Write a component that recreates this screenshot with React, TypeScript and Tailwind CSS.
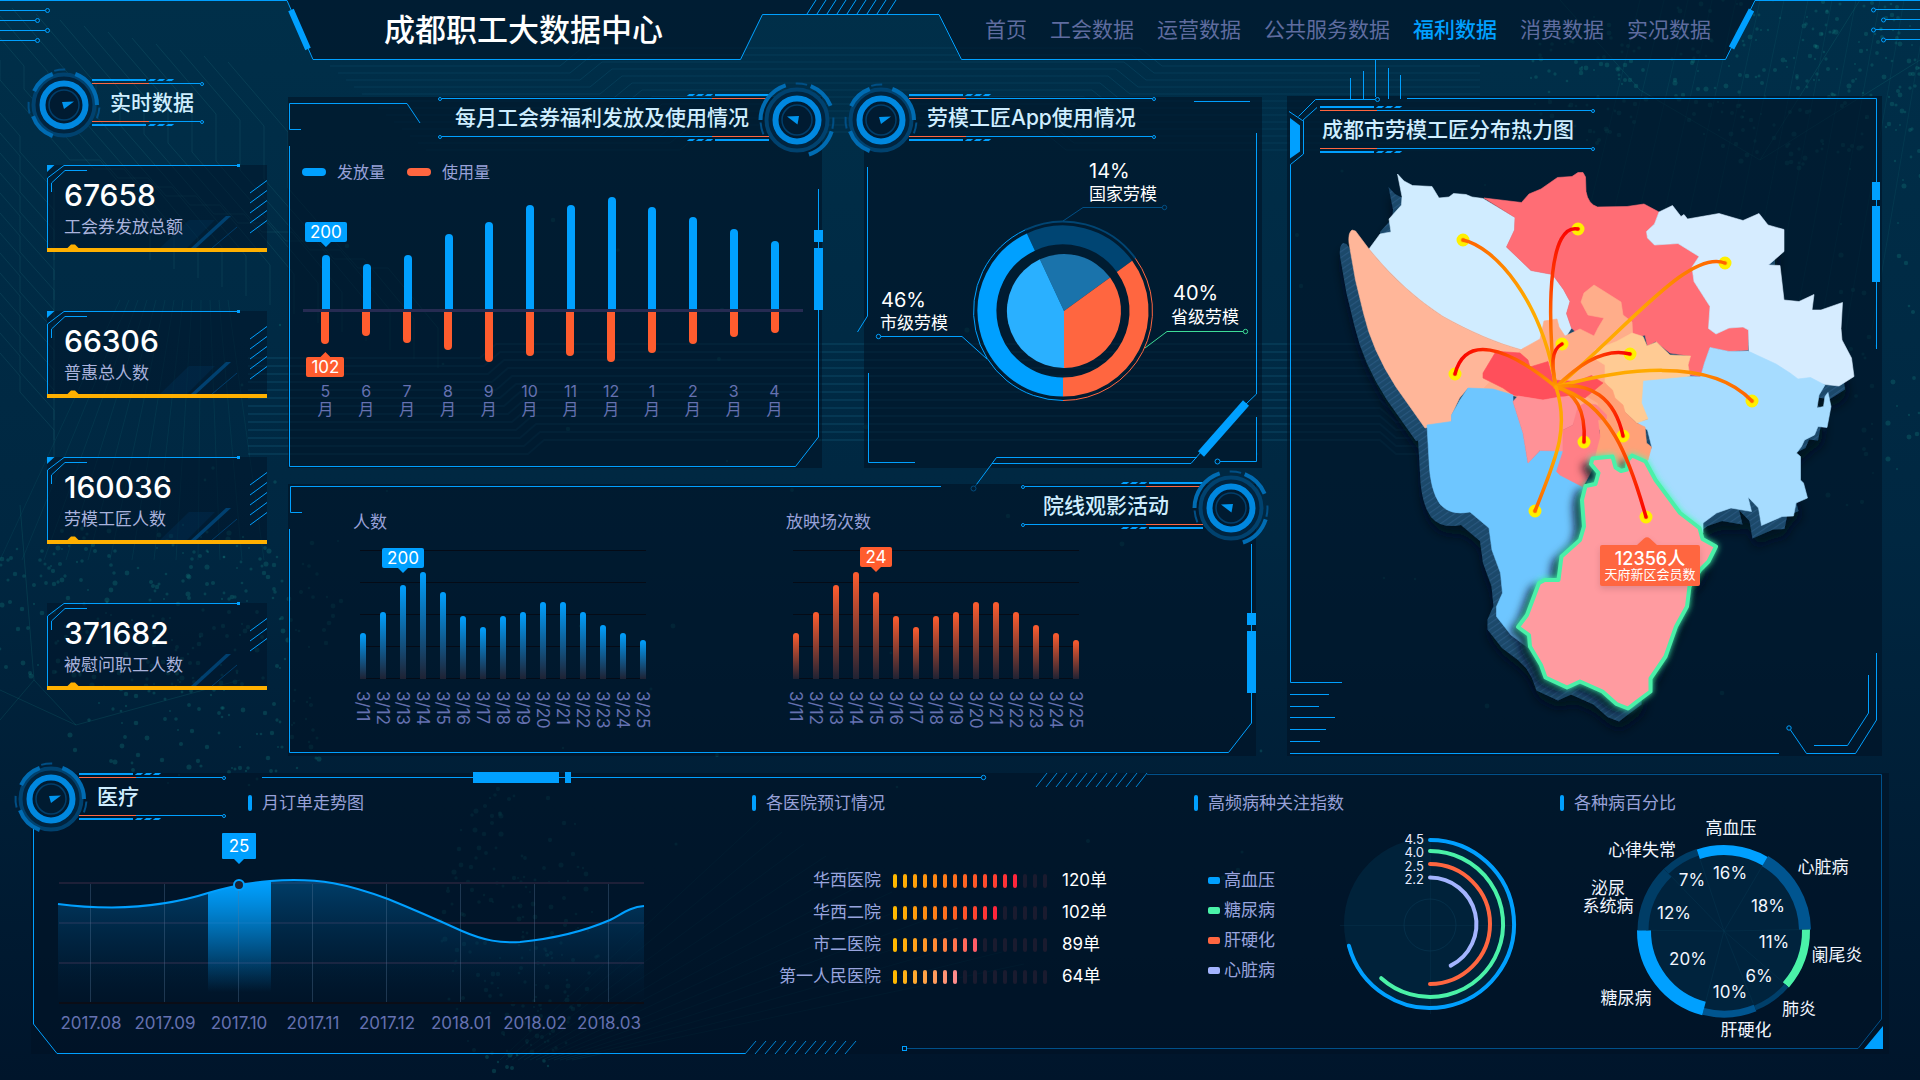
import React from "react";

/* ---------- helpers ---------- */

const polar = (cx: number, cy: number, r: number, deg: number) => {
  const a = ((deg - 90) * Math.PI) / 180;
  return `${(cx + r * Math.cos(a)).toFixed(1)} ${(cy + r * Math.sin(a)).toFixed(1)}`;
};

const arc = (cx: number, cy: number, r: number, from: number, to: number) =>
  `M${polar(cx, cy, r, from)} A${r} ${r} 0 ${to - from > 180 ? 1 : 0} 1 ${polar(cx, cy, r, to)}`;

const wedge = (cx: number, cy: number, r: number, from: number, to: number) =>
  `M${cx} ${cy} L${polar(cx, cy, r, from)} A${r} ${r} 0 ${to - from > 180 ? 1 : 0} 1 ${polar(cx, cy, r, to)} Z`;

const random = (seed: number) => {
  let s = seed;
  return () => {
    s = (s * 16807) % 2147483647;
    return s / 2147483647;
  };
};

const cloud = (seed: number, count: number, cx: number, cy: number, rx: number, ry: number) => {
  const next = random(seed);
  return Array.from({ length: count }, () => {
    const a = next() * Math.PI * 2;
    const d = Math.sqrt(next());
    return { x: Math.round(cx + Math.cos(a) * d * rx), y: Math.round(cy + Math.sin(a) * d * ry), r: 1 + next() * 1.6 };
  });
};

const dots = [
  ...cloud(7, 260, 1790, 60, 130, 110),
  ...cloud(19, 90, 1900, 250, 60, 260),
  ...cloud(31, 260, 150, 610, 190, 90),
  ...cloud(43, 90, 200, 730, 140, 60),
  ...cloud(57, 190, 520, 930, 80, 150),
  ...cloud(71, 80, 1590, 80, 60, 70),
  ...cloud(83, 60, 1000, 500, 900, 400),
];

/* ---------- shared pieces ---------- */

function Backdrop() {
  const bands = Array.from({ length: 13 }, (_, i) => i);
  return (
    <svg aria-hidden="true" className="pointer-events-none absolute inset-0 h-full w-full" viewBox="0 0 1920 1080" preserveAspectRatio="none" fill="none">
      <g stroke="#2b8a8f" strokeOpacity="0.18">
        {bands.map((i) => (
          <path key={i} d={`M${i * 24 - 60} ${-10 + i * 6} l60 70 v${20 + i * 3} l70 80 h30 l50 60 v40`} />
        ))}
        {bands.map((i) => (
          <path key={`b${i}`} d={`M${-20} ${90 + i * 20} l40 46 v16 l34 38 v30`} />
        ))}
      </g>
      <g stroke="#1f8fb0" strokeOpacity="0.15">
        {bands.map((i) => (
          <path key={i} d={`M${330 + i * 8} ${66 + i * 7} H${560 + i * 10} l22 -18 H${1140 - i * 8} l22 18 H1480`} />
        ))}
        {bands.map((i) => (
          <path key={`c${i}`} strokeWidth="2" d={`M248 ${358 + i * 8} H${480 + i * 4} l16 -14 H1380 l16 14 h60`} />
        ))}
      </g>
      <g stroke="#1c8f8a" strokeOpacity="0.12">
        {bands.map((i) => (
          <path key={i} d={`M${i * 22} 560 L${120 + i * 9} 300 M${500 + i * 6} 1060 L${760 + i * 22} ${820 + i * 12} M${1640 + i * 24} 0 L${1560 + i * 26} 330`} />
        ))}
        <path d="M0 720 L34 680 L76 725 L0 690 M34 680 L20 505 M76 725 L240 680 M1560 0 L1640 90 L1760 160 L1920 60 M1760 160 L1860 0" strokeOpacity="0.18" />
      </g>
      <g fill="#12787a" fillOpacity="0.32">
        {dots.map((d, i) => (
          <circle key={i} cx={d.x} cy={d.y} r={d.r} />
        ))}
      </g>
    </svg>
  );
}

function Frame({ box, children }: { box: string; children: React.ReactNode }) {
  return (
    <svg aria-hidden="true" className="pointer-events-none absolute inset-0 h-full w-full overflow-visible" viewBox={box} preserveAspectRatio="none" fill="none" stroke="#00a0ff">
      {children}
    </svg>
  );
}

function Dial({ flipped }: { flipped?: boolean }) {
  return (
    <svg aria-hidden="true" className="relative h-[84px] w-[84px] shrink-0" viewBox="0 0 84 84" fill="none">
      <circle cx="42" cy="42" r="32" fill="#00243f" />
      <circle cx="42" cy="42" r="30.5" stroke="#00426f" strokeWidth="4" />
      <circle cx="42" cy="42" r="21.5" fill="#001b31" stroke="#0088e0" strokeWidth="6" />
      <circle cx="42" cy="42" r="15" stroke="#003f6c" strokeWidth="1.5" />
      {flipped ? (
        <g>
          <g stroke="#006cb3" strokeWidth="4">
            <path d={arc(42, 42, 36.5, 270, 342)} />
            <path d={arc(42, 42, 36.5, 22, 67)} />
            <path d={arc(42, 42, 36.5, 108, 161)} />
          </g>
          <g stroke="#004f85" strokeWidth="2">
            <path d={arc(42, 42, 36.5, 358, 376)} />
            <path d={arc(42, 42, 36.5, 86, 104)} />
            <path d={arc(42, 42, 36.5, 247, 266)} />
          </g>
          <path d="M32 38.5 L44 38 L42.5 46.5 Z" fill="#0095ee" />
        </g>
      ) : (
        <g>
          <g stroke="#006cb3" strokeWidth="4">
            <path d={arc(42, 42, 33, 295, 340)} />
            <path d={arc(42, 42, 33, 20, 90)} />
            <path d={arc(42, 42, 33, 200, 250)} />
          </g>
          <g stroke="#004f85" strokeWidth="2">
            <path d={arc(42, 42, 35.5, 344, 362)} />
            <path d={arc(42, 42, 35.5, 94, 112)} />
            <path d={arc(42, 42, 35.5, 256, 275)} />
          </g>
          <path d="M52 38.5 L40 39 L42 46 Z" fill="#0095ee" />
        </g>
      )}
    </svg>
  );
}

function Rails({ flipped, bottom }: { flipped?: boolean; bottom?: boolean }) {
  const thick = (
    <div className={`flex h-[2px] gap-[3px] ${flipped ? "flex-row-reverse" : ""}`}>
      <span className="w-[54px] bg-[#00a0ff]" />
      <span className="w-[6px] -skew-x-[50deg] bg-[#00a0ff]" />
      <span className="w-[6px] -skew-x-[50deg] bg-[#00a0ff]" />
      <span className="w-[6px] -skew-x-[50deg] bg-[#00a0ff]" />
    </div>
  );
  const thin = (
    <div className={`flex h-[5px] items-center ${flipped ? "flex-row-reverse" : ""}`}>
      <span className="h-px w-[57px] bg-[#ff6640]" />
      <span className="h-px flex-1 bg-[#00a0ff]" />
      <span className="h-[4px] w-[4px] rounded-full border border-[#00a0ff]" />
    </div>
  );
  return <div aria-hidden="true">{bottom ? [<div key="a">{thin}</div>, <div key="b">{thick}</div>] : [<div key="a">{thick}</div>, <div key="b">{thin}</div>]}</div>;
}

function Title({ text, flipped, textClass, children }: { text: string; flipped?: boolean; textClass: string; children?: React.ReactNode }) {
  return (
    <div className={`flex items-center ${flipped ? "flex-row-reverse" : ""}`}>
      {children}
      <div className={children ? "mb-[5px]" : ""}>
        <Rails flipped={flipped} />
        <h2 className={`whitespace-nowrap text-[21px] font-medium leading-[33px] text-[#cfeeff] ${textClass}`}>{text}</h2>
        <Rails flipped={flipped} bottom />
      </div>
    </div>
  );
}

function Flag({ value, tone, up }: { value: string; tone: "blue" | "orange"; up?: boolean }) {
  const bg = tone === "blue" ? "bg-[#00a0ff]" : "bg-[#ff5c2e]";
  return (
    <span className={`flex items-center ${up ? "flex-col-reverse" : "flex-col"}`}>
      <span className={`rounded-xs px-[5px] text-[17px] leading-[20px] text-white ${bg}`}>{value}</span>
      <span className={`h-[5px] w-[10px] ${bg} ${up ? "[clip-path:polygon(50%_0,100%_100%,0_100%)]" : "[clip-path:polygon(0_0,100%_0,50%_100%)]"}`} />
    </span>
  );
}

/* ---------- header ---------- */

const links = ["首页", "工会数据", "运营数据", "公共服务数据", "福利数据", "消费数据", "实况数据"];

function Header() {
  return (
    <header className="relative flex h-[60px] items-center justify-between pl-[20%] pr-[209px]">
      <Frame box="0 0 1920 60">
        <path d="M287 0 L313 59.5 H740 L762 14.5 H939 L961 59.5 H1725 L1755 0 Z" fill="#001225" fillOpacity="0.6" stroke="none" />
        <path d="M0 0.5 H287 L313 59.5 H740.5 L762.5 14.5 H939 L961.5 59.5 H1725.5 L1755 0.5 H1920" />
        <path d="M291 10 L308 49 M1751.5 10 L1731.5 48" strokeWidth="6" />
        {[0, 1, 2, 3, 4, 5, 6, 7, 8].map((i) => (
          <path key={i} d={`M${807 + i * 10} 14 l9 -14`} />
        ))}
        <path d="M0 10.5 H45 M0 20.5 H35 M0 30.5 H45 M0 40.5 H35 M1920 9.5 H1876 M1920 19.5 H1886 M1920 29.5 H1876 M1920 39.5 H1886" />
        {[
          [47.5, 10.5], [37.5, 20.5], [47.5, 30.5], [37.5, 40.5],
          [1873.5, 10], [1883.5, 20], [1873.5, 30], [1883.5, 40],
        ].map(([x, y]) => (
          <circle key={`${x}-${y}`} cx={x} cy={y} r="2" />
        ))}
      </Frame>
      <h1 className="relative whitespace-nowrap text-[31px] font-medium leading-[60px] text-white">成都职工大数据中心</h1>
      <nav className="relative">
        <ul className="flex gap-[23px] whitespace-nowrap text-[21px] leading-[60px]">
          {links.map((name) => (
            <li key={name}>
              <a href="#" aria-current={name === "福利数据" ? "page" : undefined} className={name === "福利数据" ? "font-medium text-[#00a0ff]" : "text-[#5f6c9f]"}>
                {name}
              </a>
            </li>
          ))}
        </ul>
      </nav>
    </header>
  );
}

/* ---------- left column ---------- */

const stats = [
  { value: "67658", name: "工会券发放总额", ticks: 5 },
  { value: "66306", name: "普惠总人数", ticks: 5 },
  { value: "160036", name: "劳模工匠人数", ticks: 5 },
  { value: "371682", name: "被慰问职工人数", ticks: 3 },
];

function StatCard({ value, name, ticks }: { value: string; name: string; ticks: number }) {
  return (
    <li className="relative h-[87px] border-b-4 border-[#ffb000] bg-[#001225]/50 pl-[17px] pt-[14px]">
      <svg aria-hidden="true" className="absolute left-0 top-0 h-[83px] w-full overflow-visible" viewBox="0 0 220 83" preserveAspectRatio="none" fill="none" stroke="#00a0ff">
        {ticks === 5 && <path d="M113 83 L142 55 H168 L140 83 Z" fill="#00508a" fillOpacity="0.15" stroke="none" />}
        <path d="M144 83 L149 83 L184 51 H179 Z" fill="#004a80" fillOpacity="0.8" stroke="none" />
        <path d="M165 83 L190 62" stroke="#004a80" strokeOpacity="0.7" />
        {ticks === 5 && <path d="M0 0 H7.5 L0 7 Z" fill="#00a0ff" stroke="none" />}
        <path d="M0.5 83 V13 L17 0.5 H190 M4.5 27 V18 L18 5.5 H40" />
        <path d="M190 -1 h3 v3 h-3 z" fill="#00a0ff" stroke="none" />
        {Array.from({ length: ticks }, (_, i) => (
          <path key={i} d={`M203 ${28 + i * 10} L220 ${15.5 + i * 10}`} />
        ))}
        <path d="M20 83.5 L24 79.5 H28 L32 83.5 Z" fill="#ffb000" stroke="none" />
      </svg>
      <p className="relative text-[30px] font-medium leading-[32px] text-white">{value}</p>
      <p className="relative text-[17px] leading-[32px] text-[#a9b2dc]">{name}</p>
    </li>
  );
}

/* ---------- monthly coupons ---------- */

const months = [
  { m: "5", up: 54, down: 32 }, { m: "6", up: 45, down: 24 }, { m: "7", up: 54, down: 31 }, { m: "8", up: 75, down: 38 },
  { m: "9", up: 87, down: 50 }, { m: "10", up: 104, down: 44 }, { m: "11", up: 104, down: 44 }, { m: "12", up: 112, down: 50 },
  { m: "1", up: 102, down: 41 }, { m: "2", up: 92, down: 32 }, { m: "3", up: 80, down: 25 }, { m: "4", up: 68, down: 21 },
];

function CouponPanel() {
  return (
    <section className="relative bg-[#001225]/60 pb-[49px]">
      <Frame box="288 97 534 371">
        <path d="M301 129.5 H289.5 V103.5 H407 L420 123 M289.5 146 V466.5 H795.5 L818.5 437 V310 M818.5 230 V189 M818.5 242 V248" />
        <path d="M814 230 h9 v12 h-9 z M814 248 h9 v62 h-9 z" fill="#00a0ff" stroke="none" />
      </Frame>
      <div className="relative -mr-[17px] -mt-[19px]">
        <Title text="每月工会券福利发放及使用情况" flipped textClass="pl-[17px] pr-[20px]">
          <div className="-ml-[14px]"><Dial flipped /></div>
        </Title>
      </div>
      <ul className="relative flex h-[20px] items-center gap-[22px] pl-[14px] text-[16px] leading-[20px] text-[#98a1d8]">
        <li className="flex items-center gap-[11px]"><span className="h-[8px] w-[24px] rounded-full bg-[#00a0ff]" />发放量</li>
        <li className="flex items-center gap-[11px]"><span className="h-[8px] w-[24px] rounded-full bg-[#ff6640]" />使用量</li>
      </ul>
      <div className="relative flex h-[127px] items-end pl-[17px] pr-[27px]">
        {months.map((d, i) => (
          <div key={d.m} className="flex flex-1 flex-col items-center gap-[8px]">
            {i === 0 && <Flag value="200" tone="blue" />}
            <span className="w-[8px] rounded-t-full bg-[#00a0ff]" style={{ height: d.up }} />
          </div>
        ))}
      </div>
      <div className="relative ml-[15px] mr-[19px] h-[3px] bg-[#262b52]" />
      <div className="relative flex h-[70px] items-start pl-[17px] pr-[27px]">
        {months.map((d, i) => (
          <div key={d.m} className="flex flex-1 flex-col items-center gap-[8px]">
            <span className="w-[8px] rounded-b-full bg-[#ff5c2e]" style={{ height: d.down }} />
            {i === 0 && <Flag value="102" tone="orange" up />}
          </div>
        ))}
      </div>
      <ul className="relative flex pl-[17px] pr-[27px] text-center text-[16px] leading-[18px] text-[#6571b0]">
        {months.map((d) => (
          <li key={d.m} className="flex-1">{d.m}<br />月</li>
        ))}
      </ul>
    </section>
  );
}

/* ---------- app usage ---------- */

function UsagePanel() {
  return (
    <section className="relative bg-[#001225]/60">
      <Frame box="864 97 398 371">
        <path d="M1194 101.5 H1250 M1256.5 133 V394 L1246 404 M1201 452 L1191 463.5 H992 M1197 457.5 H996.5 L975 486.5 M1256.5 417 V461.5 H1220 M867.5 167 V316 L857.5 332 M868.5 373 V462.5 H915" />
        <path d="M1246 403 L1201 454" strokeWidth="8" />
        <circle cx="973.5" cy="488.5" r="2.5" />
        <circle cx="1217.5" cy="461.5" r="2.5" />
      </Frame>
      <div className="relative -ml-[25px] -mt-[19px]">
        <Title text="劳模工匠App使用情况" textClass="pl-[18px] pr-[20px]">
          <div className="-mr-[14px]"><Dial /></div>
        </Title>
      </div>
      <svg className="relative -mt-[10px] block w-full" viewBox="864 152 398 316" role="img" aria-label="劳模工匠App使用情况" fill="none">
        <path d={arc(1063, 311, 76, -25, 54)} stroke="#004573" strokeWidth="19" />
        <path d={arc(1063, 311, 76, 54, 180)} stroke="#ff6640" strokeWidth="19" />
        <path d={arc(1063, 311, 76, 180, 335)} stroke="#00a0ff" strokeWidth="19" />
        <path d={arc(1063, 311, 89.5, -25, 54)} stroke="#004573" strokeWidth="2" />
        <path d={arc(1063, 311, 89.5, 54, 180)} stroke="#ff6640" />
        <path d={arc(1063, 311, 89.5, 180, 335)} stroke="#00a0ff" />
        <path d={wedge(1064, 311, 57, -25, 54)} fill="#1a73ab" />
        <path d={wedge(1064, 311, 57, 54, 180)} fill="#ff6640" />
        <path d={wedge(1064, 311, 57, 180, 335)} fill="#2ab0ff" />
        <g stroke="#004f85"><path d="M1063 221 L1083 207.5 H1162" /><circle cx="1164.5" cy="207.5" r="2.2" /></g>
        <g stroke="#00a0ff"><path d="M881 336.5 H962 L987 359" /><circle cx="878.5" cy="336.5" r="2.2" /></g>
        <g stroke="#3ddc97"><path d="M1243 331.5 H1167 L1145 348" /><circle cx="1245.5" cy="331.5" r="2.2" /></g>
        <g fill="#fff" dominantBaseline="central">
          <text x="1089" y="171" fontSize="20">14%</text>
          <text x="1089" y="194" fontSize="17">国家劳模</text>
          <text x="881" y="300" fontSize="20">46%</text>
          <text x="880" y="323" fontSize="17">市级劳模</text>
          <text x="1173" y="293" fontSize="20">40%</text>
          <text x="1171" y="317" fontSize="17">省级劳模</text>
        </g>
      </svg>
    </section>
  );
}

/* ---------- cinema ---------- */

const cinema = [46, 67, 94, 107, 87, 63, 52, 63, 67, 77, 77, 67, 54, 46, 39];

function DayBars({ tone, peak, at, gap }: { tone: "blue" | "orange"; peak: string; at: number; gap: string }) {
  const bar = tone === "blue" ? "bg-linear-to-b/srgb from-[#00a0ff] to-[#1f2233]" : "bg-linear-to-b/srgb from-[#ff5c2e] to-[#1f2233]";
  return (
    <div>
      <div className="relative h-[129px]">
        <div aria-hidden="true" className="absolute inset-x-[7px] inset-y-0 flex flex-col justify-between">
          {[0, 1, 2, 3, 4].map((i) => (
            <span key={i} className="h-px bg-[#050b16]" />
          ))}
        </div>
        <div className="relative flex h-full items-end">
          {cinema.map((h, i) => (
            <div key={i} className="relative flex flex-1 justify-center">
              {i === at && (
                <span className={`absolute bottom-full flex justify-center ${gap}`}>
                  <Flag value={peak} tone={tone} />
                </span>
              )}
              <span className={`w-[6px] rounded-t-full ${bar}`} style={{ height: h }} />
            </div>
          ))}
        </div>
      </div>
      <ul className="mt-[12px] flex h-[40px] text-[17px] leading-[20px] text-[#6571b0]">
        {cinema.map((_, i) => (
          <li key={i} className="flex flex-1 justify-center [writing-mode:vertical-rl]">
            <span className="flex-1">{`3/${11 + i}`}</span>
          </li>
        ))}
      </ul>
    </div>
  );
}

function CinemaPanel() {
  return (
    <section className="relative mr-[6px] mt-[16px] flow-root bg-[#001225]/60 pb-[25px]">
      <Frame box="288 484 968 272">
        <path d="M302 512.5 H290.5 V486.5 H941 M289.5 529 V752.5 H1228.5 L1251.5 723 V693 M1251.5 544 V613 M1251.5 625 V631" />
        <path d="M1247 613 h9 v12 h-9 z M1247 631 h9 v62 h-9 z" fill="#00a0ff" stroke="none" />
      </Frame>
      <div className="relative -mr-[17px] -mt-[18px] flex justify-end">
        <Title text="院线观影活动" flipped textClass="pl-[22px] pr-[34px]">
          <div className="-ml-[14px]"><Dial flipped /></div>
        </Title>
      </div>
      <div className="relative -mt-[38px] grid grid-cols-2 gap-x-[133px] pl-[65px] pr-[170px] text-[17px] leading-[20px] text-[#98a1d8]">
        <h3>人数</h3>
        <h3>放映场次数</h3>
      </div>
      <div className="relative mt-[18px] grid grid-cols-2 gap-x-[133px] pl-[65px] pr-[170px]">
        <DayBars tone="blue" peak="200" at={2} gap="mb-[12px]" />
        <DayBars tone="orange" peak="24" at={4} gap="mb-[20px]" />
      </div>
    </section>
  );
}

/* ---------- map ---------- */

const regions = [
  { fill: "#d0ecff", d: "M117.5 174 L124 181 L132.5 185.5 L152 186.5 L159 198 L169 197 L173.5 193.5 L186 194.5 L192 197 L203 198.5 L235 217.5 L234.5 230 L226.5 247 L251 270.5 L272.5 274.5 L283.5 289.5 L290 301.5 L286.5 313.5 L291.5 328 L284 340 L242 350 Q205 340 163 316.5 Q122 290 89 249 L100 234 L111 232 L109 219 L121.5 205 L122 196.5 Z" },
  { fill: "#ff6d75", d: "M204 198 L241.5 202.5 L249 194 L261 189 L277.5 177.5 L292 176.5 L298 172.5 L303 172.5 L305.5 177 L306 191.5 Q308 204 317.5 207 L347 206.5 L364 204 L379 212 L374.5 224 L366.5 231.5 L367.5 238 L374.5 245 L398 243.5 L419 256.5 L412 267 L414 281.5 L430 306.5 L428.5 328.5 L436 334 L449 328 L463 327 L468.5 330 L468 350 L449 351.5 L430 347.5 L424.5 363 L420.5 377 L410 375 L407.5 365 L410 356 L390 353 L375.5 341.5 L367.5 346 L365 335 L330 345 L300 336 L291.5 328 L286.5 313.5 L290 301.5 L283.5 289.5 L272.5 274.5 L251 270.5 L226.5 247 L234.5 230 L235 217.5 Z" },
  { fill: "#d6ecff", d: "M379 212 L392.5 205.5 L401 216.5 L404 214.5 L407.5 219 L439 213.5 L463 220.5 L479 213.5 L488 225 L504 229.5 V251.5 L488.5 265 L500 265.5 L504 300 L519 301.5 L534 294.5 L532 310 L541 310 L562.5 302.5 L561 328.5 L562 340 L571.5 358 L574 376.5 L559 386 L541 384 L500 380 L469 353 L468.5 330 L463 327 L449 328 L436 334 L428.5 328.5 L430 306.5 L414 281.5 L412 267 L419 256.5 L398 243.5 L374.5 245 L367.5 238 L366.5 231.5 L374.5 224 Z" },
  { fill: "#ffb699", d: "M72 230 Q68 233 69 243 L75.5 280 L83.5 313 Q92 350 116 387 L145 428 L171.5 422 V415 L179.5 398 L188 388 L230 400 L260 360 L242 350 Q205 340 163 316.5 Q122 290 89 249 L75.5 231 Z" },
  { fill: "#ffad8a", d: "M242 349 L260 339 L264 321 L277 319 L279 327 L285 336 L300 329 L314 336 L318 328 L324 318 L308 315 L301 302 L304 293 L314 285 L322 290 L341 302 L343 315 L352 322 L353 340 L335 360 L345 400 L340 450 L300 410 L250 400 L204 388 Z" },
  { fill: "#a6dcff", d: "M430 347.5 L449 351.5 L468 351 L496 364 L510 373 L518 379 L530.5 377.5 L541 383 L545 385 L539 395 L537 408 L543.5 406.5 L545 396.5 L548 392.5 L551 406.5 L547 427.5 L538 426.5 L534.5 435 L524.5 440 L521.5 446.5 L516.5 453 L520.5 456.5 V480 L523.5 483 L527.5 498 L516 503 L513.5 516 L502 516.5 L481.5 525.5 L478.5 508 L468 497 L471.5 511.5 L451 508 L436.5 513 L423 523 V533 L400 513 L372 473 L363 455 L372 448 L367.5 430 L356 422 L367.5 419.5 L359 403 L360 380 L375.5 377.5 L392 375 L420.5 377 L424.5 363 Z" },
  { fill: "#ffcb94", d: "M352 333 L363 336.5 L367 346 L376.5 342 L390 355 L410.5 356 L408 365 L410 376 L390 378 L363 380.5 L361.5 403 L368 419 L356.5 423 L345 412 L335 398 L325 381.5 V365 L311.5 356.5 L315 350 L336.5 341.5 Z" },
  { fill: "#ffa178", d: "M323 381.5 L332.5 390 L335 398 L343 405 L345 412 L356.5 423 L365 427 L366.5 443 L371.5 447 L368 460 L340 475 L312 458 L320 433 L318 403 L300 392 Z" },
  { fill: "#ff4f5b", d: "M215 353 L220 351.5 L240 353 L248 360 L250 367 L268 361.5 L273 380 L296.5 381.5 L311.5 375.5 L323 383 L305 398 L293 395 L280 397 L263 400 L233 395 L223 388 L203 378 V373 Z" },
  { fill: "#6ec6ff", d: "M188 388 L213 389 L233 395 V401.5 L243 433 L248 463 L260 450.5 H283 L300 480 L320 500 L300 620 L260 660 L247 647 L231 635 L216.5 616.5 V606.5 L222.5 593 L220.5 573 L212 550 L209 528 L190 512 Q170 516 160 504 Q150 490 149 460 L147 425 L171.5 421.5 V415 L180 400 Z" },
  { fill: "#ff9297", d: "M238 396 L263 400 L280 397 L293 397 Q300 405 298 413 L293 425 L283 430 V451 L260 450.5 L248 463 L243 433 L233 401.5 Z" },
  { fill: "#ff8087", d: "M298 407 L305 403 L316.5 405 L326.5 415 V419 L318 420 L320 436.5 L316.5 450 L312 470 L303 487 L280 475 L276.5 471.5 L283 451.5 V430 L293 425 Z" },
];

const chosen =
  "M312.5 458.5 L332.5 456.5 L335.5 467.5 L341 471 L347 469.5 L348 460 L352 455.5 L365.5 461.5 L375.5 480 L400 513 L419.5 528 L422.5 539 L436 546.5 L428.5 561.5 L420.5 569.5 L409.5 586.5 L407 606.5 L396 626.5 L385.5 656.5 L370.5 678.5 V691.5 L357 701.5 L348 708.5 L336.5 704 L322.5 691.5 L300 681.5 L287 687.5 L265.5 677.5 L261 665 L250 646.5 L249 635 L238 627 L247 615 L259 583 L264.5 580 H278.5 L281.5 556.5 L300 540 L304 526.5 L302 500 L305.5 486 L315.5 484 L318.5 473 L311 464 Z";

const routes = [
  { x: 183, y: 240, d: "C215 247 262 300 276 387", warm: true },
  { x: 298, y: 229, d: "C270 223 266 300 275 387", warm: false },
  { x: 445, y: 263, d: "C410 249 350 325 277 387", warm: true },
  { x: 282, y: 344, d: "C270 350 272 368 276 387", warm: false },
  { x: 350, y: 354, d: "C325 347 300 363 276 387", warm: false },
  { x: 175, y: 374, d: "C185 335 225 345 276 387", warm: false },
  { x: 472, y: 401, d: "C430 356 340 369 276 387", warm: true },
  { x: 304, y: 442, d: "C306 410 295 392 276 387", warm: false },
  { x: 343, y: 436, d: "C335 398 310 381 276 387", warm: false },
  { x: 366, y: 517, d: "C350 460 330 402 276 387", warm: false },
  { x: 255, y: 511, d: "C275 460 290 430 276 387", warm: true },
];

function MapPanel() {
  return (
    <section className="relative ml-[25px] mt-[36px] bg-[#001225]/60 pt-[10px]">
      <Frame box="1287 96 595 660">
        <path d="M1290 118 L1300 125.5 V151.5 L1290 158.5 Z" fill="#00a0ff" stroke="none" />
        <path d="M1289 111.5 L1302.5 120.5 L1317 107.5 M1302.5 120.5 H1303.5 V154 L1290.5 164.5 V682.5 H1342 M1298.5 116.5 L1315.5 99.5 H1375 M1350.5 78 V99 M1363.5 71 V99 M1375.5 60 V97 M1388.5 68 V99 M1400.5 75 V99" />
        <circle cx="1377.5" cy="99.5" r="2" />
        <path d="M1407 98.5 H1876.5 V182 M1876.5 200 V206 M1876.5 282 V349 M1876.5 653 V720 L1855.5 753.5 H1806.5 L1790.5 730 M1868.5 675 V713 L1847.5 745.5 H1814" />
        <circle cx="1789" cy="728" r="2.2" />
        <path d="M1872 182 h8 v18 h-8 z M1872 206 h8 v76 h-8 z" fill="#00a0ff" stroke="none" />
        <path d="M1290 694.5 H1329 M1290 706.5 H1319 M1290 717.5 H1335 M1290 729.5 H1326 M1290 741.5 H1320 M1290 753.5 H1779" />
      </Frame>
      <div className="relative flex pl-[33px]">
        <Title text="成都市劳模工匠分布热力图" textClass="pl-[2px] pr-[21px]" />
      </div>
      <svg className="relative block w-full" viewBox="7 153 595 603" role="img" aria-label="成都市劳模工匠分布热力图" fill="none">
        <defs>
          <pattern id="hatch" width="5" height="5" patternUnits="userSpaceOnUse" patternTransform="rotate(-35)">
            <rect width="5" height="5" fill="#1c486b" />
            <rect width="5" height="1.2" fill="#28577c" />
          </pattern>
          <filter id="depth" x="-20%" y="-20%" width="140%" height="140%">
            <feDropShadow dx="2" dy="8" stdDeviation="6" floodColor="#000814" floodOpacity="0.8" />
          </filter>
          <filter id="lift" x="-30%" y="-20%" width="160%" height="140%">
            <feDropShadow dx="-9" dy="5" stdDeviation="4" floodColor="#001020" floodOpacity="0.85" />
          </filter>
          <filter id="glow" x="-20%" y="-20%" width="140%" height="140%">
            <feDropShadow dx="0" dy="0" stdDeviation="3" floodColor="#3dffb0" floodOpacity="1" />
          </filter>
          {routes.map((r, i) => (
            <radialGradient key={i} id={`route${i}`} gradientUnits="userSpaceOnUse" cx="276" cy="387" r={Math.round(Math.hypot(r.x - 276, r.y - 387))}>
              <stop offset="0" stopColor={r.warm ? "#ffa500" : "#ff9a00"} />
              <stop offset="0.5" stopColor={r.warm ? "#ffab00" : "#ff5a00"} />
              <stop offset="1" stopColor={r.warm ? "#ff6200" : "#fb0000"} />
            </radialGradient>
          ))}
        </defs>
        <g transform="translate(-9 13)" filter="url(#depth)">
          {regions.map((r) => (
            <path key={r.fill} d={r.d} fill="url(#hatch)" />
          ))}
          <path d={chosen} fill="url(#hatch)" />
        </g>
        {regions.map((r) => (
          <path key={r.fill} d={r.d} fill={r.fill} stroke={r.fill} strokeWidth="0.6" strokeLinejoin="round" />
        ))}
        <path d={chosen} fill="#ff9ba0" filter="url(#lift)" />
        <path d={chosen} fill="#ff9ba0" stroke="#4bf0a8" strokeWidth="4" strokeLinejoin="round" filter="url(#glow)" />
        {routes.map((r) => (
          <circle key={r.x} cx={r.x} cy={r.y} r="4.5" stroke="#fff000" strokeWidth="4" fill="#ffc800" />
        ))}
        {routes.map((r, i) => (
          <path key={r.x} d={`M${r.x} ${r.y} ${r.d}`} stroke={`url(#route${i})`} strokeWidth="3.5" strokeLinecap="round" />
        ))}
        <g className="drop-shadow-md">
          <path d="M322 545 H357 L364 538.5 Q367 536 370 538.5 L377 545 H418 Q420 545 420 547 V584 Q420 586 418 586 H322 Q320 586 320 584 V547 Q320 545 322 545 Z" fill="#ff6640" />
        </g>
        <g fill="#fff" textAnchor="middle" dominantBaseline="central">
          <text x="370" y="558" fontSize="18" fontWeight="500">12356人</text>
          <text x="370" y="574" fontSize="13">天府新区会员数</text>
        </g>
      </svg>
    </section>
  );
}

/* ---------- medical ---------- */

function Caption({ text }: { text: string }) {
  return (
    <h3 className="flex items-center gap-[10px] whitespace-nowrap text-[17px] leading-[20px] text-[#98a1d8]">
      <span aria-hidden="true" className="h-[16px] w-[4px] rounded-xs bg-[#00a0ff]" />
      {text}
    </h3>
  );
}

const trend =
  "M58 904 C80 907 95 907.5 112 907.5 C150 907 180 902 208 893 C225 888 245 883 270 881 C320 877 350 885 388 899 C415 910 440 921 462 931 C485 941 500 943 520 942 C550 939 580 933 610 920 C622 914 630 907 644 906";

const periods = ["2017.08", "2017.09", "2017.10", "2017.11", "2017.12", "2018.01", "2018.02", "2018.03"];

function TrendChart() {
  return (
    <svg className="relative -mt-[8px] block w-full" viewBox="31 833 714 216" role="img" aria-label="月订单走势图" fill="none">
      <defs>
        <linearGradient id="area" x1="0" y1="880" x2="0" y2="1003" gradientUnits="userSpaceOnUse">
          <stop offset="0" stopColor="#006fb5" stopOpacity="0.45" />
          <stop offset="1" stopColor="#003a66" stopOpacity="0" />
        </linearGradient>
        <linearGradient id="focus" x1="0" y1="882" x2="0" y2="992" gradientUnits="userSpaceOnUse">
          <stop offset="0" stopColor="#00a0ff" />
          <stop offset="1" stopColor="#00a0ff" stopOpacity="0" />
        </linearGradient>
        <clipPath id="window"><rect x="208" y="870" width="63" height="133" /></clipPath>
      </defs>
      <path d="M59 883 H644 M59 923 H644 M59 963 H644" stroke="#1e2038" strokeWidth="2" />
      <path d={`${trend} V1003 H58 Z`} fill="url(#area)" />
      <path d={`${trend} V1003 H58 Z`} fill="url(#focus)" clipPath="url(#window)" />
      {periods.map((p, i) => (
        <path key={p} d={`M${90.5 + i * 74} 884 V1002`} stroke="#56789a" strokeOpacity="0.35" />
      ))}
      <path d="M59 1003 H644" stroke="#0b0d16" strokeWidth="2" />
      <path d={trend} stroke="#00a0ff" strokeWidth="2" />
      <circle cx="239" cy="885" r="5" fill="#1b2233" stroke="#00a0ff" strokeWidth="2" />
      <path d="M223 833 H255 Q256 833 256 834 V858 Q256 859 255 859 H244 L239 864 L234 859 H223 Q222 859 222 858 V834 Q222 833 223 833 Z" fill="#00a0ff" />
      <text x="239" y="846" fontSize="17" fill="#fff" textAnchor="middle" dominantBaseline="central">25</text>
      <g fontSize="17" fill="#6571b0" textAnchor="middle" dominantBaseline="central">
        {periods.map((p, i) => (
          <text key={p} x={91 + i * 74} y="1023">{p}</text>
        ))}
      </g>
    </svg>
  );
}

const hospitals = [
  { name: "华西医院", value: 120, lit: 13, end: [255, 38, 60] },
  { name: "华西二院", value: 102, lit: 11, end: [255, 38, 60] },
  { name: "市二医院", value: 89, lit: 9, end: [255, 92, 104] },
  { name: "第一人民医院", value: 64, lit: 7, end: [255, 140, 140] },
];

const ramp = (end: number[], t: number) => {
  const mix = [255, 184, 0].map((c, i) => Math.round(c + (end[i] - c) * t));
  return `rgb(${mix.join(",")})`;
};

function HospitalTable() {
  return (
    <table className="mt-[52px] text-[17px]" aria-label="各医院预订情况">
      <tbody>
        {hospitals.map((h) => (
          <tr key={h.name} className="h-[32px]">
            <th scope="row" className="w-[136px] p-0 text-right font-normal text-[#98a4de]">{h.name}</th>
            <td className="py-0 pl-[12px] pr-[15px]">
              <span className="flex gap-[6px]">
                {Array.from({ length: 16 }, (_, i) => (
                  <span key={i} className="h-[14px] w-[4px] rounded-full bg-[#1a1b2f]" style={i < h.lit ? { backgroundColor: ramp(h.end, i / (h.lit - 1)) } : undefined} />
                ))}
              </span>
            </td>
            <td className="p-0 text-white">{h.value}单</td>
          </tr>
        ))}
      </tbody>
    </table>
  );
}

function IndexChart() {
  const rings = [
    { r: 84, to: 255, color: "#00a0ff", label: "4.5", y: 839 },
    { r: 73, to: 222, color: "#4af2a8", label: "4.0", y: 852 },
    { r: 60, to: 180, color: "#ff6640", label: "2.5", y: 866 },
    { r: 46.5, to: 153.5, color: "#a3b4ff", label: "2.2", y: 879 },
  ];
  return (
    <svg className="min-w-0 flex-1" viewBox="1290 823 263 203" role="img" aria-label="高频病种关注指数" fill="none">
      <circle cx="1430" cy="924" r="86" fill="#00253f" fillOpacity="0.8" />
      <path d="M1340 925.5 H1516 M1430.5 838 V1014" stroke="#0a3c57" strokeOpacity="0.3" />
      <circle cx="1430" cy="925" r="26" stroke="#0a3c57" strokeOpacity="0.5" />
      {rings.map((g) => (
        <g key={g.label}>
          <path d={arc(1430, 924, g.r, 0, g.to)} stroke={g.color} strokeWidth="4" strokeLinecap="round" />
          <text x="1424" y={g.y} fontSize="13" fill="#e6ecff" textAnchor="end" dominantBaseline="central">{g.label}</text>
        </g>
      ))}
    </svg>
  );
}

const diseases = [
  { name: "高血压", color: "bg-[#00a0ff]" },
  { name: "糖尿病", color: "bg-[#4af2a8]" },
  { name: "肝硬化", color: "bg-[#ff6640]" },
  { name: "心脏病", color: "bg-[#a3b4ff]" },
];

function ShareChart() {
  const slices = [
    { from: 30.5, to: 89, r: 81, w: 12, color: "#005590" },
    { from: 89, to: 131, r: 82, w: 8, color: "#4af2a8" },
    { from: 131, to: 158, r: 83, w: 5, color: "#003f6a" },
    { from: 158, to: 194.5, r: 83, w: 7, color: "#005590" },
    { from: 194.5, to: 270.5, r: 80, w: 14, color: "#00a0ff" },
    { from: 270.5, to: 316, r: 81, w: 11, color: "#003d66" },
    { from: 316, to: 341.5, r: 83, w: 7, color: "#003d66" },
    { from: -18.5, to: 30.5, r: 81, w: 10, color: "#00a0ff" },
  ];
  const shares: [string, number, number][] = [
    ["16%", 1730, 873], ["18%", 1768, 906], ["11%", 1774, 942], ["6%", 1759, 976],
    ["10%", 1730, 992], ["20%", 1688, 959], ["12%", 1674, 913], ["7%", 1692, 880],
  ];
  const names: [string, number, number][] = [
    ["高血压", 1731, 828], ["心律失常", 1642, 850], ["心脏病", 1823, 867], ["泌尿", 1608, 888], ["系统病", 1608, 906],
    ["阑尾炎", 1837, 955], ["糖尿病", 1626, 998], ["肺炎", 1799, 1009], ["肝硬化", 1746, 1030],
  ];
  return (
    <svg className="block w-full" viewBox="1553 813 336 241" role="img" aria-label="各种病百分比" fill="none">
      <circle cx="1724" cy="931" r="82" fill="#00253f" fillOpacity="0.9" />
      {slices.map((s) => (
        <g key={s.from}>
          <path d={`M1724 931 L${polar(1724, 931, 78, s.from)}`} stroke="#0a3c57" strokeOpacity="0.35" />
          <path d={arc(1724, 931, s.r, s.from, s.to)} stroke={s.color} strokeWidth={s.w} />
        </g>
      ))}
      <g fill="#f2f6ff" textAnchor="middle" dominantBaseline="central">
        {shares.map(([t, x, y]) => (
          <text key={t} x={x} y={y} fontSize="17">{t}</text>
        ))}
        {names.map(([t, x, y]) => (
          <text key={t} x={x} y={y} fontSize="17">{t}</text>
        ))}
      </g>
    </svg>
  );
}

function MedicalPanel() {
  const eleven = Array.from({ length: 11 }, (_, i) => i);
  return (
    <section className="relative mb-[26px] ml-[31px] mr-[31px] mt-[17px] grid grid-cols-[714fr_442fr_366fr_336fr] bg-[#001225]/60">
      <Frame box="31 773 1858 281">
        <path d="M262 777.5 H981 M33.5 829 V1024 L57 1053.5 H745" />
        <circle cx="983.5" cy="777.5" r="2.2" />
        <path d="M473 772 h86 v11 h-86 z M565 772 h6 v11 h-6 z M1883 1026 V1049 H1864 Z" fill="#00a0ff" stroke="none" />
        {eleven.map((i) => (
          <path key={i} d={`M${1036 + i * 10} 787 l11 -14 M${745 + i * 10} 1054 l11 -13`} strokeOpacity="0.8" />
        ))}
        <path d="M1147 774.5 H1881.5 V1019 L1858 1048.5 H907" stroke="#00508a" />
        <rect x="902.5" y="1046.5" width="4" height="4" />
      </Frame>
      <div className="relative">
        <div className="-ml-[22px] -mt-[16px] flex items-center">
          <Title text="医疗" textClass="pl-[18px] pr-[87px]">
            <div className="-mr-[14px]"><Dial /></div>
          </Title>
          <div className="ml-[22px] mt-[8px]"><Caption text="月订单走势图" /></div>
        </div>
        <TrendChart />
      </div>
      <div className="relative pt-[20px]">
        <div className="pl-[7px]"><Caption text="各医院预订情况" /></div>
        <HospitalTable />
      </div>
      <div className="relative pl-[7px] pt-[20px]">
        <Caption text="高频病种关注指数" />
        <div className="mt-[10px] flex pl-[14px]">
          <ul className="mt-[42px] w-[82px] whitespace-nowrap text-[17px] leading-[30px] text-[#98a4de]">
            {diseases.map((d) => (
              <li key={d.name} className="flex items-center gap-[4px]">
                <span className={`h-[7px] w-[12px] rounded-xs ${d.color}`} />
                {d.name}
              </li>
            ))}
          </ul>
          <IndexChart />
        </div>
      </div>
      <div className="relative pt-[20px]">
        <div className="pl-[7px]"><Caption text="各种病百分比" /></div>
        <ShareChart />
      </div>
    </section>
  );
}

/* ---------- page ---------- */

export default function App() {
  return (
    <div className="relative min-h-screen overflow-hidden bg-linear-to-b from-[#002f49] via-[#002741] to-[#00152b] font-['Inter','Noto_Sans_CJK_SC',sans-serif]">
      <Backdrop />
      <Header />
      <main>
        <div className="relative grid grid-cols-[288fr_974fr_620fr] pr-[38px]">
          <aside className="pl-[22px] pt-[3px]">
            <Title text="实时数据" textClass="pl-[18px] pr-[10px]">
              <div className="-mr-[14px]"><Dial /></div>
            </Title>
            <ul className="ml-[25px] mr-[21px] mt-[18px] flex flex-col gap-[59px]">
              {stats.map((s) => (
                <StatCard key={s.name} {...s} />
              ))}
            </ul>
          </aside>
          <div className="pt-[37px]">
            <div className="grid grid-cols-[534fr_398fr] gap-[42px]">
              <CouponPanel />
              <UsagePanel />
            </div>
            <CinemaPanel />
          </div>
          <MapPanel />
        </div>
        <MedicalPanel />
      </main>
    </div>
  );
}
